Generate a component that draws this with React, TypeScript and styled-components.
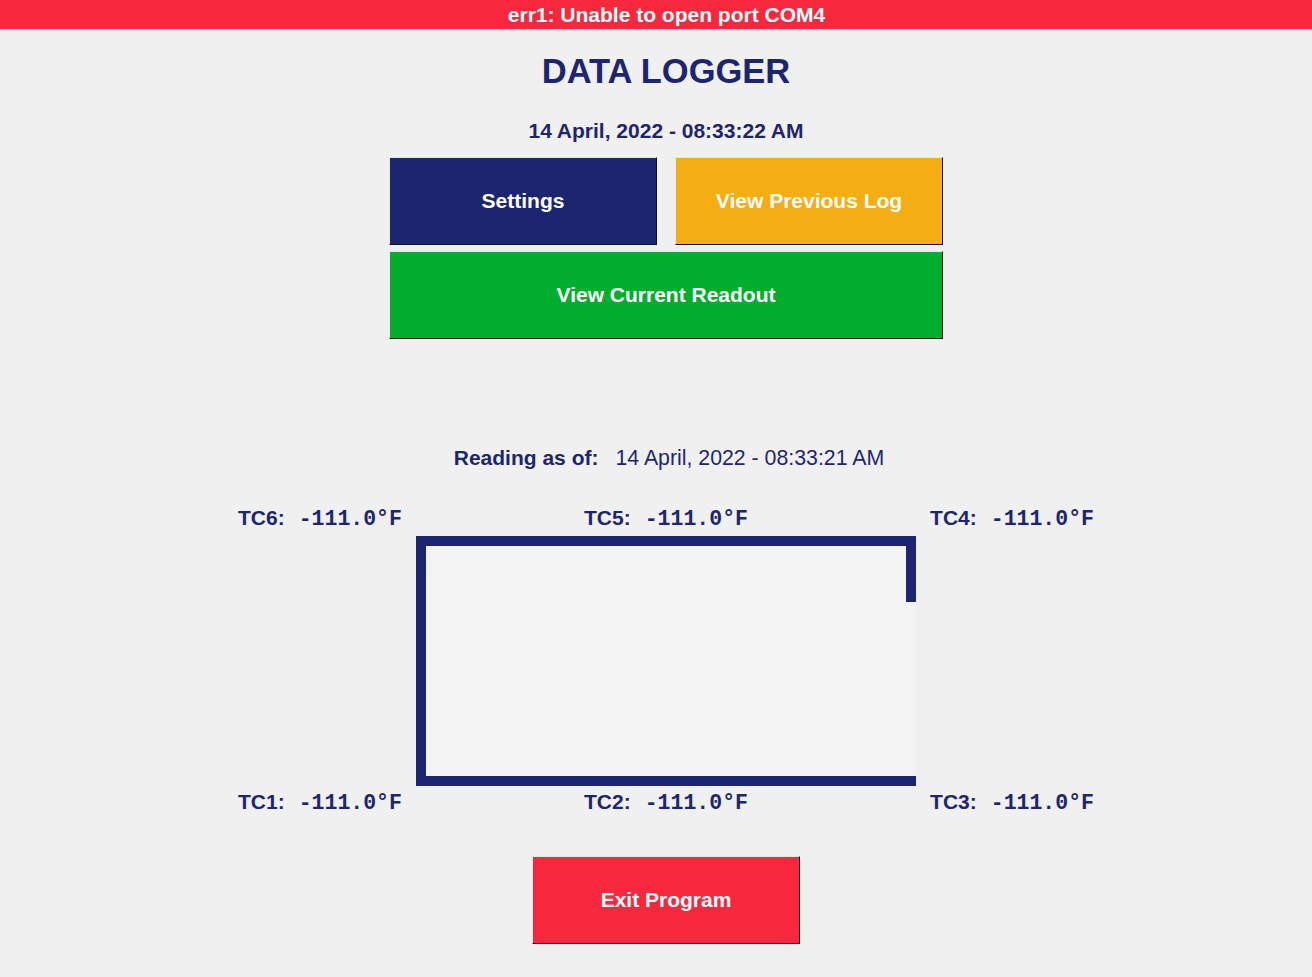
import React, { FunctionComponent, ReactElement } from 'react';
import styled, { createGlobalStyle } from 'styled-components';

const colors = {
    bg: '#f0f0f0',
    panel: '#f3f3f3',
    navy: '#1c2670',
    orange: '#f5ad14',
    green: '#03ad2d',
    red: '#f7273d',
    white: '#ffffff',
};

const sans = '"Liberation Sans", Arial, sans-serif';
const mono = '"Liberation Mono", "Courier New", monospace';

const GlobalStyle = createGlobalStyle`
    html, body {
        margin: 0;
        padding: 0;
        background: ${colors.bg};
        font-family: ${sans};
        overflow-x: hidden;
    }
`;

const Page = styled.div`
    display: flex;
    flex-direction: column;
    min-height: 977px;
`;

const ErrorBar = styled.div`
    height: 29px;
    line-height: 30px;
    padding-left: 21px;
    background: ${colors.red};
    color: ${colors.white};
    font-size: 21px;
    font-weight: bold;
    text-align: center;
`;

const Main = styled.main`
    display: flex;
    flex-direction: column;
    align-items: center;
    padding-left: 20px;
    color: ${colors.navy};
`;

const Title = styled.h1`
    margin: 22px 0 0;
    font-size: 34.5px;
    line-height: 40px;
    font-weight: bold;
`;

const Clock = styled.div`
    margin-top: 28px;
    font-size: 21px;
    line-height: 24px;
    font-weight: bold;
`;

const ButtonGrid = styled.div`
    display: grid;
    grid-template-columns: 268px 268px;
    grid-auto-rows: 88px;
    column-gap: 18px;
    row-gap: 6px;
    margin-top: 14px;
`;

interface IButton {
    bg: string;
    wide?: boolean;
}

const Button = styled.button<IButton>`
    display: flex;
    align-items: center;
    justify-content: center;
    box-sizing: border-box;
    grid-column: ${({ wide }: IButton): string => (wide ? '1 / span 2' : 'auto')};
    width: ${({ wide }: IButton): string => (wide ? '554px' : '268px')};
    height: 88px;
    padding: 0;
    background: ${({ bg }: IButton): string => bg};
    border: 1px solid;
    border-color: #e6e6e6 #111111 #111111 #e6e6e6;
    color: ${colors.white};
    font-family: ${sans};
    font-size: 21px;
    font-weight: bold;
    cursor: pointer;
`;

const ReadingLine = styled.div`
    display: flex;
    align-items: baseline;
    gap: 17px;
    margin: 107px 0 0 6px;
    font-size: 21px;
    line-height: 24px;
`;

const ReadingLabel = styled.span`
    font-weight: bold;
`;

const ReadingValue = styled.span`
    font-size: 21.3px;
`;

const Readout = styled.section`
    display: flex;
    flex-direction: column;
    width: 856px;
    margin-top: 38px;
`;

interface ISensorRow {
    mtop?: string;
    mbottom?: string;
}

const SensorRow = styled.div<ISensorRow>`
    display: flex;
    justify-content: space-between;
    margin-top: ${({ mtop }: ISensorRow): string => mtop || '0'};
    margin-bottom: ${({ mbottom }: ISensorRow): string => mbottom || '0'};
`;

const Sensor = styled.div`
    display: flex;
    align-items: baseline;
    gap: 14px;
    line-height: 20px;
`;

const SensorName = styled.span`
    font-size: 21px;
    font-weight: bold;
`;

const SensorValue = styled.span`
    font-family: ${mono};
    font-size: 21.5px;
    font-weight: bold;
`;

const Chamber = styled.div`
    position: relative;
    align-self: center;
    box-sizing: border-box;
    width: 500px;
    height: 250px;
    background: ${colors.panel};
    border: 10px solid ${colors.navy};
    border-right: none;

    &::after {
        content: '';
        position: absolute;
        top: -10px;
        right: 0;
        width: 10px;
        height: 66px;
        background: ${colors.navy};
    }
`;

const ExitButton = styled(Button)`
    margin-top: 43px;
`;

interface ISensor {
    name: string;
    value: string;
}

const top: ISensor[] = [
    { name: 'TC6:', value: '-111.0°F' },
    { name: 'TC5:', value: '-111.0°F' },
    { name: 'TC4:', value: '-111.0°F' },
];

const bottom: ISensor[] = [
    { name: 'TC1:', value: '-111.0°F' },
    { name: 'TC2:', value: '-111.0°F' },
    { name: 'TC3:', value: '-111.0°F' },
];

const renderSensor = ({ name, value }: ISensor): ReactElement => (
    <Sensor key={name}>
        <SensorName>{name}</SensorName>
        <SensorValue>{value}</SensorValue>
    </Sensor>
);

const App: FunctionComponent = (): ReactElement => (
    <Page>
        <GlobalStyle />
        <ErrorBar>err1: Unable to open port COM4</ErrorBar>
        <Main>
            <Title>DATA LOGGER</Title>
            <Clock>14 April, 2022 - 08:33:22 AM</Clock>
            <ButtonGrid>
                <Button bg={colors.navy}>Settings</Button>
                <Button bg={colors.orange}>View Previous Log</Button>
                <Button bg={colors.green} wide>
                    View Current Readout
                </Button>
            </ButtonGrid>
            <ReadingLine>
                <ReadingLabel>Reading as of:</ReadingLabel>
                <ReadingValue>14 April, 2022 - 08:33:21 AM</ReadingValue>
            </ReadingLine>
            <Readout>
                <SensorRow mbottom="7px">{top.map(renderSensor)}</SensorRow>
                <Chamber />
                <SensorRow mtop="6px">{bottom.map(renderSensor)}</SensorRow>
            </Readout>
            <ExitButton bg={colors.red}>Exit Program</ExitButton>
        </Main>
    </Page>
);

export default App;
